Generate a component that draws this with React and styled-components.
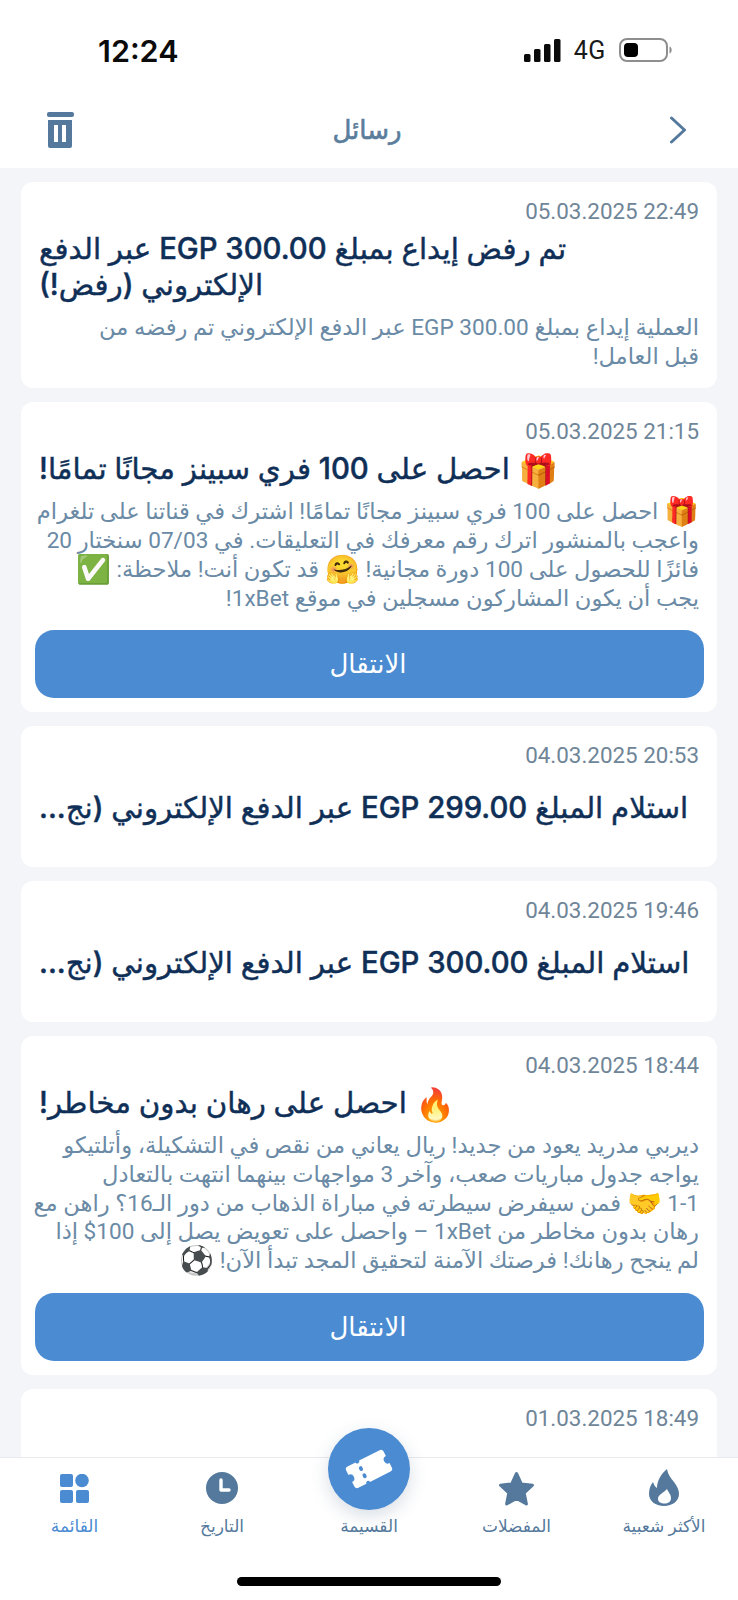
import React from 'react';
import styled, { createGlobalStyle } from 'styled-components';

const GlobalStyle = createGlobalStyle`
  html, body {
    margin: 0;
    padding: 0;
    background: #fff;
  }
  * {
    box-sizing: border-box;
  }
`;

const Screen = styled.div`
  width: 738px;
  height: 1600px;
  display: flex;
  flex-direction: column;
  overflow: hidden;
  background: #f3f5f9;
  font-family: 'Roboto', 'DejaVu Sans', sans-serif;
`;

const StatusBar = styled.div`
  height: 100px;
  flex-shrink: 0;
  background: #fff;
  display: flex;
  align-items: center;
  justify-content: space-between;
  padding: 0 66px 0 98px;
`;

const Clock = styled.span`
  font-family: 'Inter', sans-serif;
  font-size: 30.5px;
  font-weight: 600;
  color: #0b0b0b;
`;

const StatusIcons = styled.div`
  display: flex;
  align-items: center;
  gap: 13px;
`;

const Network = styled.span`
  font-size: 25px;
  letter-spacing: 0.6px;
  color: #1a1a1a;
`;

const Header = styled.header`
  height: 68px;
  flex-shrink: 0;
  background: #fff;
  display: grid;
  grid-template-columns: 1fr auto 1fr;
  align-items: center;
  padding: 0 51px 8px 47px;
`;

const HeaderTitle = styled.h1`
  margin: 0;
  font-size: 26px;
  font-weight: 400;
  -webkit-text-stroke: 0.6px #5b7d9c;
  color: #5b7d9c;
`;

const BackSlot = styled.div`
  display: flex;
  justify-content: flex-end;
`;

const List = styled.main`
  flex: 1;
  min-height: 0;
  overflow: hidden;
  display: flex;
  flex-direction: column;
  gap: 14px;
  padding: 14px 21px 0;
`;

const Card = styled.article`
  flex-shrink: 0;
  background: #fff;
  border-radius: 12px;
  padding: 17px 18px 0;
`;

const DateLine = styled.div`
  height: 24px;
  line-height: 24px;
  text-align: right;
  font-size: 22.4px;
  color: #6f8598;
`;

const Line = styled.span`
  display: block;
`;

const Emoji = styled.span`
  font-size: 1.24em;
  line-height: 1;
  vertical-align: -0.08em;
  -webkit-text-stroke: 0;
`;

const Title = styled.h2`
  margin: ${(p) => (p.$single ? '23px 0 41px' : '8px 0 0')};
  direction: rtl;
  text-align: left;
  font-family: 'Inter', 'DejaVu Sans', sans-serif;
  font-size: 29.3px;
  line-height: 36px;
  font-weight: 500;
  -webkit-text-stroke: 0.45px #0f2f57;
  color: #0f2f57;
  white-space: nowrap;

  ${Emoji} {
    font-size: 1.1em;
  }
`;

const Body = styled.p`
  margin: 11px 0 0;
  direction: rtl;
  text-align: right;
  font-size: 22.6px;
  line-height: 28.7px;
  color: #6a8aa5;
  white-space: nowrap;
  padding-bottom: 17px;
`;

const GoButton = styled.button`
  display: block;
  width: calc(100% + 9px);
  margin: 0 -5px 14px -4px;
  height: 68px;
  border: 0;
  border-radius: 19px;
  padding: 0 3px 0 0;
  background: #4a8bd2;
  color: #fff;
  font-family: inherit;
  font-size: 26px;
`;

const BottomNav = styled.nav`
  position: relative;
  height: 143px;
  flex-shrink: 0;
  background: #fff;
  border-top: 1px solid #e8eaee;
  display: grid;
  grid-template-columns: 149px 146px 148px 147px 148px;
  padding-top: 10px;
`;

const NavItem = styled.div`
  display: flex;
  flex-direction: column;
  align-items: center;
  color: ${(p) => (p.$active ? '#4a8bd2' : '#55799c')};
`;

const NavIcon = styled.div`
  height: 40px;
  display: flex;
  align-items: center;
  justify-content: center;
  color: inherit;
`;

const NavLabel = styled.span`
  margin-top: 7px;
  font-size: 17px;
  line-height: 22px;
  white-space: nowrap;
`;

const TicketCircle = styled.div`
  position: absolute;
  left: 328px;
  top: -30px;
  width: 82px;
  height: 82px;
  border-radius: 50%;
  background: #4a8bd2;
  box-shadow: 0 6px 18px rgba(40, 70, 110, 0.18);
  display: flex;
  align-items: center;
  justify-content: center;
`;

const HomeBar = styled.div`
  position: absolute;
  left: 237px;
  top: 119px;
  width: 264px;
  height: 9px;
  border-radius: 5px;
  background: #000;
`;

const SignalIcon = () => (
  <svg width="37" height="23" viewBox="0 0 37 23" fill="#0b0b0b">
    <rect x="0" y="15" width="6.5" height="8" rx="1.5" />
    <rect x="10" y="10" width="6.5" height="13" rx="1.5" />
    <rect x="20" y="5" width="6.5" height="18" rx="1.5" />
    <rect x="30" y="0" width="6.5" height="23" rx="1.5" />
  </svg>
);

const BatteryIcon = () => (
  <svg width="53" height="24" viewBox="0 0 53 24">
    <rect x="1" y="1" width="47" height="22" rx="7" fill="none" stroke="#8e8e8e" strokeWidth="2" />
    <rect x="5" y="5" width="14" height="14" rx="4" fill="#000" />
    <path d="M50.5 8.5c1.5.6 2.2 2 2.2 3.5s-.7 2.9-2.2 3.5z" fill="#8e8e8e" />
  </svg>
);

const TrashIcon = () => (
  <svg width="27" height="36" viewBox="0 0 27 36" fill="#55799c">
    <rect x="0" y="0" width="27" height="5" rx="2" />
    <path d="M1 8h24v26a2 2 0 0 1-2 2H3a2 2 0 0 1-2-2z" />
    <rect x="7" y="13" width="4" height="17" fill="#fff" />
    <rect x="15" y="13" width="4" height="17" fill="#fff" />
  </svg>
);

const BackIcon = () => (
  <svg width="18" height="28" viewBox="0 0 18 28" fill="none" stroke="#55799c" strokeWidth="3" strokeLinecap="round" strokeLinejoin="round">
    <path d="M2.500 2l13 12-13 12" />
  </svg>
);

const GridIcon = () => (
  <svg width="29" height="29" viewBox="0 0 29 29" fill="currentColor">
    <rect x="0" y="0" width="13" height="13" rx="2" />
    <circle cx="22" cy="6.5" r="6.8" />
    <rect x="0" y="16" width="13" height="13" rx="2" />
    <rect x="16" y="16" width="13" height="13" rx="2" />
  </svg>
);

const ClockIcon = () => (
  <svg width="32" height="32" viewBox="0 0 32 32">
    <circle cx="16" cy="16" r="16" fill="currentColor" />
    <path d="M15 8v10h8" fill="none" stroke="#fff" strokeWidth="3.4" strokeLinecap="round" strokeLinejoin="round" />
  </svg>
);

const StarIcon = () => (
  <svg width="37" height="35" viewBox="0 0 37 35" fill="currentColor" stroke="currentColor" strokeWidth="3" strokeLinejoin="round">
    <path d="M18.5 2.500l4.800 10.400 11.200 1.300-8.300 7.700 2.200 11.100-9.900-5.600-9.900 5.600 2.200-11.100-8.300-7.700 11.200-1.300z" />
  </svg>
);

const FlameIcon = () => (
  <svg width="30" height="38" viewBox="0 0 30 38" fill="currentColor">
    <path
      fillRule="evenodd"
      d="M18 0C19 6 22 9 25 13C28 17 30 21 30 25C30 32 23.500 37 15 37C6.500 37 0 32 0 25C0 20 1.500 16 4 13C5 16 6 18 8 19C8 12 12 5 18 0ZM18 20C15 24 9 25 9 30C9 33 12 34.500 15.500 34.500C19 34.500 22 33 22 29C22 25 19 23 18 20Z"
    />
  </svg>
);

const TicketIcon = () => (
  <svg width="50" height="50" viewBox="0 0 50 50">
    <g transform="rotate(-27 25 25)">
      <path
        d="M7 13h9a2 2 0 0 0 4 0h23a3 3 0 0 1 3 3v5a4 4 0 0 0 0 8v5a3 3 0 0 1-3 3H20a2 2 0 0 0-4 0H7a3 3 0 0 1-3-3v-5a4 4 0 0 0 0-8v-5a3 3 0 0 1 3-3z"
        fill="#fff"
      />
      <rect x="16.2" y="18.500" width="3.600" height="5" rx="1.800" fill="#4a8bd2" />
      <rect x="16.2" y="26.500" width="3.600" height="5" rx="1.800" fill="#4a8bd2" />
    </g>
  </svg>
);

const withEmoji = (text) =>
  text.split(/(🎁|🤗|✅|🔥|🤝|⚽)/u).map((part, i) => (i % 2 ? <Emoji key={i}>{part}</Emoji> : part));

const messages = [
  {
    date: '05.03.2025 22:49',
    title: ['تم رفض إيداع بمبلغ EGP 300.00 عبر الدفع', 'الإلكتروني (رفض!)'],
    body: ['العملية إيداع بمبلغ EGP 300.00 عبر الدفع الإلكتروني تم رفضه من', 'قبل العامل!'],
  },
  {
    date: '05.03.2025 21:15',
    title: ['🎁 احصل على 100 فري سبينز مجانًا تمامًا!'],
    body: [
      '🎁 احصل على 100 فري سبينز مجانًا تمامًا! اشترك في قناتنا على تلغرام',
      'واعجب بالمنشور اترك رقم معرفك في التعليقات. في 07/03 سنختار 20',
      'فائزًا للحصول على 100 دورة مجانية! 🤗 قد تكون أنت! ملاحظة: ✅',
      'يجب أن يكون المشاركون مسجلين في موقع 1xBet!',
    ],
    action: true,
  },
  {
    date: '04.03.2025 20:53',
    title: ['استلام المبلغ EGP 299.00 عبر الدفع الإلكتروني (نج...'],
    single: true,
  },
  {
    date: '04.03.2025 19:46',
    title: ['استلام المبلغ EGP 300.00 عبر الدفع الإلكتروني (نج...'],
    single: true,
  },
  {
    date: '04.03.2025 18:44',
    title: ['🔥 احصل على رهان بدون مخاطر!'],
    body: [
      'ديربي مدريد يعود من جديد! ريال يعاني من نقص في التشكيلة، وأتلتيكو',
      'يواجه جدول مباريات صعب، وآخر 3 مواجهات بينهما انتهت بالتعادل',
      '1-1 🤝 فمن سيفرض سيطرته في مباراة الذهاب من دور الـ16؟ راهن مع',
      'رهان بدون مخاطر من 1xBet – واحصل على تعويض يصل إلى 100$ إذا',
      'لم ينجح رهانك! فرصتك الآمنة لتحقيق المجد تبدأ الآن! ⚽',
    ],
    action: true,
  },
  {
    date: '01.03.2025 18:49',
    title: [],
    single: true,
  },
];

const navItems = [
  { label: 'القائمة', icon: <GridIcon />, active: true },
  { label: 'التاريخ', icon: <ClockIcon /> },
  { label: 'القسيمة' },
  { label: 'المفضلات', icon: <StarIcon /> },
  { label: 'الأكثر شعبية', icon: <FlameIcon /> },
];

const App = () => (
  <>
    <GlobalStyle />
    <Screen>
      <StatusBar>
        <Clock>12:24</Clock>
        <StatusIcons>
          <SignalIcon />
          <Network>4G</Network>
          <BatteryIcon />
        </StatusIcons>
      </StatusBar>
      <Header>
        <TrashIcon />
        <HeaderTitle>رسائل</HeaderTitle>
        <BackSlot>
          <BackIcon />
        </BackSlot>
      </Header>
      <List>
        {messages.map((m) => (
          <Card key={m.date}>
            <DateLine>{m.date}</DateLine>
            <Title $single={m.single}>
              {m.title.map((t) => (
                <Line key={t}>{withEmoji(t)}</Line>
              ))}
            </Title>
            {m.body && (
              <Body>
                {m.body.map((t) => (
                  <Line key={t}>{withEmoji(t)}</Line>
                ))}
              </Body>
            )}
            {m.action && <GoButton>الانتقال</GoButton>}
          </Card>
        ))}
      </List>
      <BottomNav>
        {navItems.map((item) => (
          <NavItem key={item.label} $active={item.active}>
            <NavIcon>{item.icon}</NavIcon>
            <NavLabel>{item.label}</NavLabel>
          </NavItem>
        ))}
        <TicketCircle>
          <TicketIcon />
        </TicketCircle>
        <HomeBar />
      </BottomNav>
    </Screen>
  </>
);

export default App;
